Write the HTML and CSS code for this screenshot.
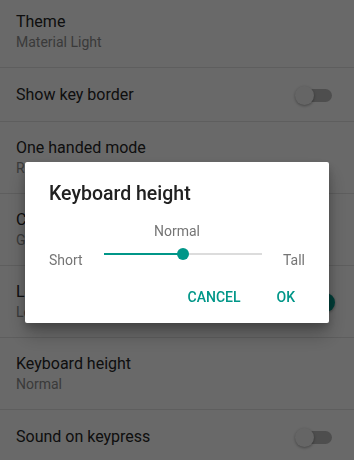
FILE: index.html
```html
<!DOCTYPE html>
<html lang="en">
<head>
    <meta charset="UTF-8">
    <meta name="viewport" content="width=device-width, initial-scale=1.0">
    <title>Appearance</title>
    <link rel="stylesheet" href="styles.css">
</head>
<body>
    <div class="prefs">
        <div class="pref first">
            <div class="pref-text">
                <div class="pref-title">Theme</div>
                <div class="pref-summary">Material Light</div>
            </div>
        </div>
        <div class="pref single">
            <div class="pref-text">
                <div class="pref-title">Show key border</div>
            </div>
            <div class="switch"><span class="track"></span><span class="thumb"></span></div>
        </div>
        <div class="pref">
            <div class="pref-text">
                <div class="pref-title">One handed mode</div>
                <div class="pref-summary">Right</div>
            </div>
        </div>
        <div class="pref">
            <div class="pref-text">
                <div class="pref-title">Custom input styles</div>
                <div class="pref-summary">German (QWERTY)</div>
            </div>
        </div>
        <div class="pref">
            <div class="pref-text">
                <div class="pref-title">Long press for symbols</div>
                <div class="pref-summary">Long press keys to type symbols</div>
            </div>
            <div class="switch on"><span class="track"></span><span class="thumb"></span></div>
        </div>
        <div class="pref">
            <div class="pref-text">
                <div class="pref-title">Keyboard height</div>
                <div class="pref-summary">Normal</div>
            </div>
        </div>
        <div class="pref single">
            <div class="pref-text">
                <div class="pref-title">Sound on keypress</div>
            </div>
            <div class="switch"><span class="track"></span><span class="thumb"></span></div>
        </div>
    </div>

    <div class="scrim">
        <div class="dialog">
            <div class="dialog-title">Keyboard height</div>
            <div class="seek-value">Normal</div>
            <div class="seek-row">
                <span class="seek-label">Short</span>
                <div class="seekbar">
                    <span class="seek-track"></span>
                    <span class="seek-progress"></span>
                    <span class="seek-thumb"></span>
                </div>
                <span class="seek-label">Tall</span>
            </div>
            <div class="dialog-buttons">
                <button>Cancel</button>
                <button>OK</button>
            </div>
        </div>
    </div>
</body>
</html>
```

FILE: styles.css
```css
body {
    margin: 0;
    font-family: Roboto, "Noto Sans", sans-serif;
    background-color: #fff;
    overflow: hidden;
}
.prefs {
    margin-top: -3px;
}
.pref {
    display: flex;
    align-items: center;
    padding: 16px 16px 15px 16px;
    border-bottom: 1px solid #e4e4e4;
}
.pref.first {
    padding-top: 15px;
}
.pref.single {
    padding-top: 17px;
    padding-bottom: 16px;
}
.pref-text {
    flex: 1;
    min-width: 0;
    white-space: nowrap;
}
.pref-title {
    font-size: 16px;
    line-height: 20px;
    color: #262626;
}
.pref-summary {
    font-size: 14px;
    line-height: 20px;
    color: #8e8e8e;
}
.switch {
    position: relative;
    width: 40px;
    height: 20px;
    margin-right: 3px;
}
.switch .track {
    position: absolute;
    left: 5px;
    top: 4px;
    width: 32px;
    height: 13px;
    border-radius: 7px;
    background-color: #bdbdbd;
}
.switch .thumb {
    position: absolute;
    left: 0;
    top: 1px;
    width: 19px;
    height: 19px;
    border-radius: 50%;
    background-color: #f5f5f5;
    box-shadow: 0 1px 3px rgba(0, 0, 0, 0.35);
}
.switch.on .track {
    background-color: #80cbc4;
}
.switch.on .thumb {
    left: 21px;
    background-color: #009688;
}
.scrim {
    position: fixed;
    top: 0;
    left: 0;
    right: 0;
    bottom: 0;
    background-color: rgba(0, 0, 0, 0.59);
    display: flex;
    justify-content: center;
    align-items: flex-start;
    padding-top: 162px;
}
.dialog {
    width: 304px;
    box-sizing: border-box;
    background-color: #fff;
    border-radius: 2px;
    padding: 20px 0 8px 0;
    box-shadow: 0 12px 20px rgba(0, 0, 0, 0.25), 0 4px 8px rgba(0, 0, 0, 0.2);
}
.dialog-title {
    padding: 0 24px;
    font-size: 19.5px;
    line-height: 24px;
    font-weight: 500;
    color: #212121;
}
.seek-value {
    margin-top: 15px;
    text-align: center;
    font-size: 14px;
    line-height: 20px;
    color: #757575;
}
.seek-row {
    display: flex;
    margin-top: 9px;
    padding: 0 24px;
}
.seek-label {
    font-size: 14px;
    line-height: 20px;
    color: #757575;
}
.seekbar {
    position: relative;
    flex: 1;
    height: 12px;
    margin: -2px 21px 0 21px;
}
.seek-track,
.seek-progress {
    position: absolute;
    left: 0;
    top: 5px;
    height: 2px;
}
.seek-track {
    right: 0;
    background-color: #dcdcdc;
}
.seek-progress {
    width: 50%;
    background-color: #009688;
}
.seek-thumb {
    position: absolute;
    left: 50%;
    top: 0;
    width: 12px;
    height: 12px;
    margin-left: -6px;
    border-radius: 50%;
    background-color: #009688;
}
.dialog-buttons {
    display: flex;
    justify-content: flex-end;
    gap: 12px;
    margin-top: 9px;
    padding-right: 22px;
}
.dialog-buttons button {
    height: 36px;
    padding: 0 12px;
    border: none;
    background: none;
    font-family: Roboto, "Noto Sans", sans-serif;
    font-size: 14px;
    font-weight: 500;
    text-transform: uppercase;
    color: #009688;
    cursor: pointer;
}
```
